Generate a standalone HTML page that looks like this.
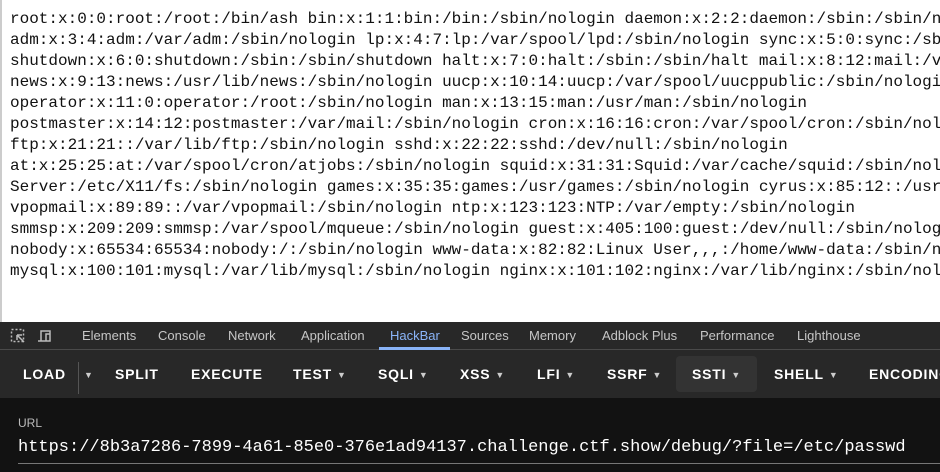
<!DOCTYPE html><html><head><style>
html,body{margin:0;width:940px;height:472px;overflow:hidden;background:#fff;position:relative;font-family:"Liberation Sans",sans-serif}
#pre{position:absolute;left:10px;top:9px;width:930px;overflow:hidden;font:16px/21px "Liberation Mono",monospace;color:#111;white-space:pre;}
#lb{position:absolute;left:0;top:0;width:2px;height:322px;background:#ccc}
#dt{position:absolute;left:0;top:322px;width:940px;height:150px;background:#121212;overflow:hidden}
#tabs{height:27px;background:#282828;border-bottom:1px solid #4a4a4a;position:relative;font-size:13px;color:#c6c6c6}
#tabs span{position:absolute;top:6px}
#bar{height:48px;background:#282828;position:relative;color:#fff;font-weight:bold;font-size:14px;letter-spacing:.8px}
#bar span{position:absolute;top:16px;white-space:nowrap}
.c{font-size:9px;color:#ccc;margin-left:5px;font-style:normal;position:relative;top:-1px}
</style></head><body>
<div id="lb"></div>
<div id="pre">root:x:0:0:root:/root:/bin/ash bin:x:1:1:bin:/bin:/sbin/nologin daemon:x:2:2:daemon:/sbin:/sbin/nologin
adm:x:3:4:adm:/var/adm:/sbin/nologin lp:x:4:7:lp:/var/spool/lpd:/sbin/nologin sync:x:5:0:sync:/sbin:/bin/sync
shutdown:x:6:0:shutdown:/sbin:/sbin/shutdown halt:x:7:0:halt:/sbin:/sbin/halt mail:x:8:12:mail:/var/mail
news:x:9:13:news:/usr/lib/news:/sbin/nologin uucp:x:10:14:uucp:/var/spool/uucppublic:/sbin/nologin
operator:x:11:0:operator:/root:/sbin/nologin man:x:13:15:man:/usr/man:/sbin/nologin
postmaster:x:14:12:postmaster:/var/mail:/sbin/nologin cron:x:16:16:cron:/var/spool/cron:/sbin/nologin
ftp:x:21:21::/var/lib/ftp:/sbin/nologin sshd:x:22:22:sshd:/dev/null:/sbin/nologin
at:x:25:25:at:/var/spool/cron/atjobs:/sbin/nologin squid:x:31:31:Squid:/var/cache/squid:/sbin/nologin
Server:/etc/X11/fs:/sbin/nologin games:x:35:35:games:/usr/games:/sbin/nologin cyrus:x:85:12::/usr/cyrus
vpopmail:x:89:89::/var/vpopmail:/sbin/nologin ntp:x:123:123:NTP:/var/empty:/sbin/nologin
smmsp:x:209:209:smmsp:/var/spool/mqueue:/sbin/nologin guest:x:405:100:guest:/dev/null:/sbin/nologin
nobody:x:65534:65534:nobody:/:/sbin/nologin www-data:x:82:82:Linux User,,,:/home/www-data:/sbin/nologin
mysql:x:100:101:mysql:/var/lib/mysql:/sbin/nologin nginx:x:101:102:nginx:/var/lib/nginx:/sbin/nologin</div>
<div id="dt">
<div id="tabs">
<svg style="position:absolute;left:10px;top:6px" width="48" height="16" fill="none" stroke="#bbb" stroke-width="1.5"><rect x="1.5" y="1.5" width="12" height="12" stroke-dasharray="2 2"/><path d="M7 7l7 7M7 7v5M7 7h5"/><path d="M28 13h10M31 13V3h9v10h-4V6h4"/><path d="M54 1v14" stroke="#555"/></svg>
<span style="left:82px">Elements</span><span style="left:158px">Console</span><span style="left:228px">Network</span><span style="left:301px">Application</span>
<span style="left:390px;color:#8ab4f8">HackBar</span><div style="position:absolute;left:379px;top:25px;width:71px;height:3px;background:#8ab4f8"></div>
<span style="left:461px">Sources</span><span style="left:529px">Memory</span><span style="left:602px">Adblock Plus</span><span style="left:700px">Performance</span><span style="left:797px">Lighthouse</span>
</div>
<div id="bar">
<div style="position:absolute;left:78px;top:12px;width:1px;height:32px;background:#555"></div>
<div style="position:absolute;left:676px;top:6px;width:81px;height:36px;background:#333;border-radius:4px"></div>
<span style="left:23px">LOAD</span><span style="left:84px"><i class="c" style="margin:0">▼</i></span><span style="left:115px">SPLIT</span><span style="left:191px">EXECUTE</span>
<span style="left:293px">TEST<i class="c">▼</i></span><span style="left:378px">SQLI<i class="c">▼</i></span><span style="left:460px">XSS<i class="c">▼</i></span>
<span style="left:537px">LFI<i class="c">▼</i></span><span style="left:607px">SSRF<i class="c">▼</i></span><span style="left:692px">SSTI<i class="c">▼</i></span>
<span style="left:774px">SHELL<i class="c">▼</i></span><span style="left:869px">ENCODING</span>
</div>
<div style="position:absolute;left:18px;top:94px;font-size:12px;color:#bbb">URL</div>
<div style="position:absolute;left:18px;top:116px;font:17px 'Liberation Mono',monospace;color:#fff;white-space:nowrap">https://8b3a7286-7899-4a61-85e0-376e1ad94137.challenge.ctf.show/debug/?file=/etc/passwd</div>
<div style="position:absolute;left:18px;top:141px;width:922px;height:1px;background:#777"></div>
</div>
</body></html>
